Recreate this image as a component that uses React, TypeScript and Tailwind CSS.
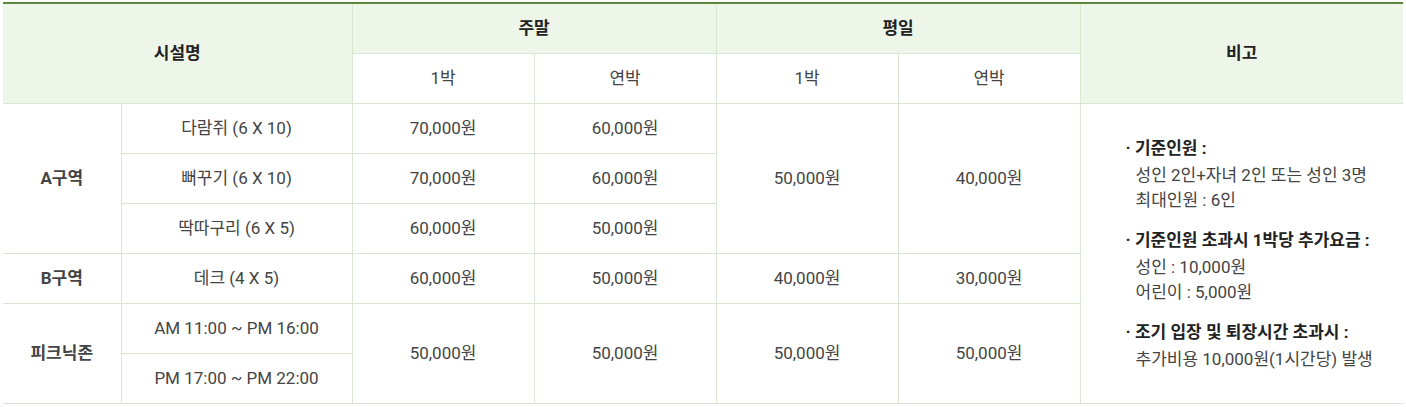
const font = { fontFamily: "Roboto, 'Noto Sans CJK KR', sans-serif" };

const th = "border border-[#d9e6d2] bg-[#eef6ea] font-bold text-[#222] text-[17px]";
const td = "border border-[#d9e6d2] text-[#444] text-[17px] text-center h-[50px] p-0 pt-[2px]";

function Note({ title, lines }: { title: string; lines: string[] }) {
  return (
    <div>
      <p className="font-bold text-[#222] leading-[25px] mb-[2px]">· {title}</p>
      {lines.map((l) => (
        <p key={l} className="pl-[10px] leading-[25px]">
          {l}
        </p>
      ))}
    </div>
  );
}

export default function App() {
  return (
    <div className="bg-white px-[3px] pt-[2px]" style={font}>
      <table className="w-full border-collapse border-t-2 border-t-[#5b8a3c] table-fixed">
        <colgroup>
          <col className="w-[118px]" />
          <col className="w-[231px]" />
          <col className="w-[182px]" />
          <col className="w-[182px]" />
          <col className="w-[182px]" />
          <col className="w-[182px]" />
          <col />
        </colgroup>
        <thead>
          <tr className="h-[50px]">
            <th colSpan={2} rowSpan={2} className={`${th} border-l-0`}>
              시설명
            </th>
            <th colSpan={2} className={th}>주말</th>
            <th colSpan={2} className={th}>평일</th>
            <th rowSpan={2} className={`${th} border-r-0`}>비고</th>
          </tr>
          <tr className="h-[50px]">
            <td className={`${td} bg-white`}>1박</td>
            <td className={`${td} bg-white`}>연박</td>
            <td className={`${td} bg-white`}>1박</td>
            <td className={`${td} bg-white`}>연박</td>
          </tr>
        </thead>
        <tbody>
          <tr>
            <td rowSpan={3} className={`${td} border-l-0 font-bold text-[#222]`}>A구역</td>
            <td className={td}>다람쥐 (6 X 10)</td>
            <td className={td}>70,000원</td>
            <td className={td}>60,000원</td>
            <td rowSpan={3} className={td}>50,000원</td>
            <td rowSpan={3} className={td}>40,000원</td>
            <td rowSpan={6} className={`${td} border-r-0 text-left align-middle`}>
              <div className="flex flex-col gap-[15px] pl-[45px]">
                <Note
                  title="기준인원 :"
                  lines={["성인 2인+자녀 2인 또는 성인 3명", "최대인원 : 6인"]}
                />
                <Note
                  title="기준인원 초과시 1박당 추가요금 :"
                  lines={["성인 : 10,000원", "어린이 : 5,000원"]}
                />
                <Note
                  title="조기 입장 및 퇴장시간 초과시 :"
                  lines={["추가비용 10,000원(1시간당) 발생"]}
                />
              </div>
            </td>
          </tr>
          <tr>
            <td className={td}>뻐꾸기 (6 X 10)</td>
            <td className={td}>70,000원</td>
            <td className={td}>60,000원</td>
          </tr>
          <tr>
            <td className={td}>딱따구리 (6 X 5)</td>
            <td className={td}>60,000원</td>
            <td className={td}>50,000원</td>
          </tr>
          <tr>
            <td className={`${td} border-l-0 font-bold text-[#222]`}>B구역</td>
            <td className={td}>데크 (4 X 5)</td>
            <td className={td}>60,000원</td>
            <td className={td}>50,000원</td>
            <td className={td}>40,000원</td>
            <td className={td}>30,000원</td>
          </tr>
          <tr>
            <td rowSpan={2} className={`${td} border-l-0 font-bold text-[#222]`}>피크닉존</td>
            <td className={td}>AM 11:00 ~ PM 16:00</td>
            <td rowSpan={2} className={td}>50,000원</td>
            <td rowSpan={2} className={td}>50,000원</td>
            <td rowSpan={2} className={td}>50,000원</td>
            <td rowSpan={2} className={td}>50,000원</td>
          </tr>
          <tr>
            <td className={td}>PM 17:00 ~ PM 22:00</td>
          </tr>
        </tbody>
      </table>
    </div>
  );
}
